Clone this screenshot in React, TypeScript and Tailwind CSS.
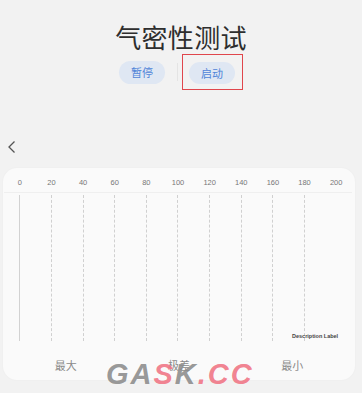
const ticks = [0, 20, 40, 60, 80, 100, 120, 140, 160, 180, 200];

const cjk = { fontFamily: '"Noto Sans CJK SC", "Noto Sans", sans-serif' };
const latin = { fontFamily: '"Liberation Sans", sans-serif' };

export default function App() {
  return (
    <div
      className="relative h-[393px] w-[362px] overflow-hidden bg-[#f2f2f2]"
      style={cjk}
    >
      <h1 className="pt-[21px] text-center text-[26px] leading-[31px] font-normal tracking-[0.3px] text-[#2e2e2e]">
        气密性测试
      </h1>

      <div className="mt-[2px] flex items-center justify-center">
        <button className="h-[23px] w-[46px] rounded-full bg-[#dfe7f3] text-[11px] leading-none text-[#4f84d8]">
          暂停
        </button>
        <div className="ml-[12px] mr-[4px] h-[18px] w-px bg-[#e4e4e4]" />
        <div className="h-[36px] w-[61px] border-[1.5px] border-[#e0464c] pl-[6px] pt-[7px]">
          <div className="flex h-[22px] w-[46px] items-center justify-center rounded-full bg-[#dfe7f3] text-[11px] leading-none text-[#4f84d8]">
            启动
          </div>
        </div>
      </div>

      <div className="ml-[7px] mt-[50px] h-[14px] w-[10px]">
        <svg width="10" height="14" viewBox="0 0 10 14" fill="none">
          <path d="M7.5 1.5 L2 7 L7.5 12.5" stroke="#555" strokeWidth="1.3" />
        </svg>
      </div>

      <div className="relative ml-[3px] mt-[14px] h-[212px] w-[352px] rounded-[14px] bg-[#fafafa] px-[1px] pt-[10px] shadow-[0_0_2px_rgba(0,0,0,0.04)]">
        <div className="grid w-[348px] grid-cols-11 border-b border-[#efefef] pb-[4px]">
          {ticks.map((t) => (
            <div key={t} className="text-center text-[7.5px] leading-[10px] text-[#777]" style={latin}>
              {t}
            </div>
          ))}
        </div>
        <div className="grid h-[148px] w-[348px] grid-cols-11 pt-[2px]">
          {ticks.map((t, i) => (
            <div key={t} className="flex justify-center">
              {i === 0 && <div className="h-full w-px bg-[#d2d2d2]" />}
              {i > 0 && i < 10 && <div className="h-full border-l border-dashed border-[#d0d0d0]" />}
            </div>
          ))}
        </div>
        <div
          className="absolute left-[289px] top-[166px] text-[5.5px] leading-none font-bold text-[#444]"
          style={latin}
        >
          Description Label
        </div>
        <div className="mt-[16px] grid grid-cols-3 px-[5px] text-center text-[11px] leading-[16px] text-[#8a8a8a]">
          <span>最大</span>
          <span>极差</span>
          <span>最小</span>
        </div>
      </div>

      <div
        className="pointer-events-none absolute left-[106px] top-[360px] text-[29px] leading-none font-bold italic tracking-[2px]"
        style={latin}
      >
        <span className="text-[#8c8c8c]/90">GA</span>
        <span className="text-[#f07484]/90">S</span>
        <span className="text-[#8c8c8c]/90">K</span>
        <span className="text-[#f07484]/90">.CC</span>
      </div>
    </div>
  );
}
